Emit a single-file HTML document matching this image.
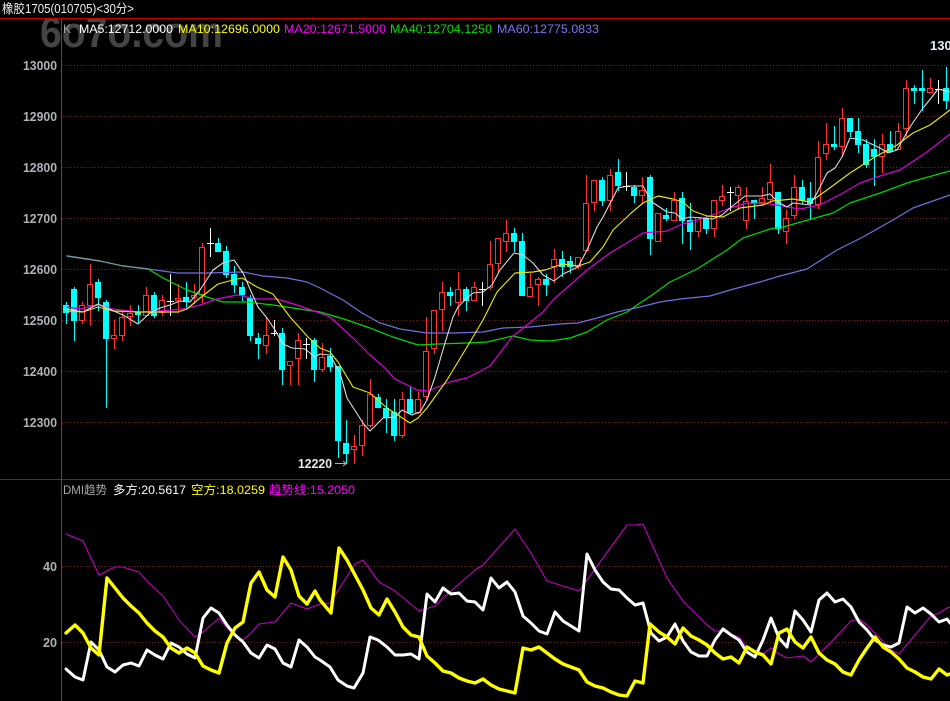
<!DOCTYPE html>
<html>
<head>
<meta charset="utf-8">
<title>橡胶1705</title>
<style>
html,body{margin:0;padding:0;background:#000;width:950px;height:701px;overflow:hidden}
svg{display:block;position:absolute;left:0;top:0}
text{font-family:"Liberation Sans","Noto Sans CJK SC",sans-serif;white-space:pre}
.ax{font-weight:bold;font-size:13px;fill:#aeb2b6}
.lg{font-size:12px}
.g{stroke:#7e1c1c;stroke-width:1;stroke-dasharray:1 2;fill:none}
.l{fill:none;stroke-linejoin:round;stroke-linecap:round}
</style>
</head>
<body>
<svg width="950" height="701" viewBox="0 0 950 701" xmlns="http://www.w3.org/2000/svg">
<rect width="950" height="701" fill="#000"/>
<clipPath id="c1"><rect x="0" y="19" width="950" height="40"/></clipPath>
<text clip-path="url(#c1)" x="40" y="47" font-size="44" font-weight="bold" fill="#444444" textLength="183" lengthAdjust="spacingAndGlyphs">6o7o.com</text>

<text x="2" y="13" font-size="12.5" fill="#f0f0f0" style="font-family:'WenQuanYi Zen Hei','Liberation Sans',sans-serif" textLength="132" lengthAdjust="spacingAndGlyphs">橡胶1705(010705)&lt;30分&gt;</text>

<g shape-rendering="crispEdges">
<path d="M0 18.5H950M0 479.5H950" stroke="#c40000" fill="none"/>
<path d="M61.5 19V701" stroke="#a82a2a" fill="none"/>
<path class="g" d="M62 65.5H950M62 116.5H950M62 167.5H950M62 218.5H950M62 269.5H950M62 320.5H950M62 371.5H950M62 422.5H950M62 566.5H950M62 642.5H950"/>

<!-- red wicks -->
<path fill="none" stroke="#ff3232" d="M82.5 302V324M90.5 264V326M114.5 320V349M122.5 310V341M130.5 305V326M146.5 287V317M162.5 295V316M178.5 284V313M194.5 284V304M202.5 243V303M266.5 317V354M290.5 361V385M298.5 333V385M322.5 343V372M354.5 435V464M362.5 420V456M370.5 379V428M402.5 392V438M418.5 392V414M426.5 317V400M434.5 310V354M442.5 282V331M458.5 272V316M474.5 282V301M490.5 241V290M498.5 238V273M506.5 220V252M530.5 273V297M538.5 277V306M554.5 249V283M578.5 257V269M586.5 175V252M594.5 180V211M610.5 169V211M642.5 177V203M658.5 213V242M674.5 192V221M698.5 217V237M714.5 200V237M722.5 185V206M738.5 185V210M746.5 187V229M762.5 187V206M770.5 164V203M786.5 210V244M794.5 175V219M818.5 141V209M826.5 123V160M842.5 108V157M882.5 134V173M898.5 123V150M906.5 80V137M930.5 78V93"/>
<!-- red bodies -->
<path fill="#000" stroke="#ff3232" d="M79.5 305.5h5V320.5h-5zM87.5 284.5h5V305.5h-5zM111.5 335.5h5V338.5h-5zM119.5 317.5h5V335.5h-5zM127.5 313.5h5V316.5h-5zM143.5 295.5h5V315.5h-5zM159.5 300.5h5V312.5h-5zM175.5 298.5h5V300.5h-5zM191.5 295.5h5V297.5h-5zM199.5 247.5h5V294.5h-5zM263.5 335.5h5V345.5h-5zM287.5 361.5h5V365.5h-5zM295.5 340.5h5V358.5h-5zM319.5 357.5h5V369.5h-5zM351.5 446.5h5V449.5h-5zM359.5 425.5h5V445.5h-5zM367.5 394.5h5V425.5h-5zM399.5 399.5h5V435.5h-5zM415.5 399.5h5V412.5h-5zM423.5 351.5h5V396.5h-5zM431.5 310.5h5V348.5h-5zM439.5 292.5h5V309.5h-5zM455.5 289.5h5V302.5h-5zM471.5 287.5h5V300.5h-5zM487.5 264.5h5V287.5h-5zM495.5 238.5h5V263.5h-5zM503.5 233.5h5V241.5h-5zM527.5 287.5h5V296.5h-5zM535.5 279.5h5V284.5h-5zM551.5 259.5h5V266.5h-5zM575.5 257.5h5V266.5h-5zM583.5 203.5h5V250.5h-5zM591.5 180.5h5V202.5h-5zM607.5 175.5h5V200.5h-5zM639.5 190.5h5V195.5h-5zM655.5 213.5h5V241.5h-5zM671.5 200.5h5V220.5h-5zM695.5 217.5h5V231.5h-5zM711.5 200.5h5V228.5h-5zM719.5 196.5h5V200.5h-5zM735.5 187.5h5V195.5h-5zM743.5 201.5h5V220.5h-5zM759.5 198.5h5V202.5h-5zM767.5 182.5h5V199.5h-5zM783.5 218.5h5V231.5h-5zM791.5 187.5h5V215.5h-5zM815.5 157.5h5V204.5h-5zM823.5 144.5h5V153.5h-5zM839.5 118.5h5V146.5h-5zM879.5 144.5h5V156.5h-5zM895.5 131.5h5V149.5h-5zM903.5 88.5h5V128.5h-5zM927.5 88.5h5V92.5h-5z"/>
<!-- cyan wicks -->
<path fill="none" stroke="#00ffff" d="M66.5 302V324M74.5 287V341M98.5 279V311M106.5 300V408M138.5 305V324M154.5 292V318M186.5 282V309M218.5 238V252M226.5 246V278M234.5 266V293M242.5 282V301M250.5 295V341M258.5 333V359M282.5 328V385M314.5 338V382M330.5 348V372M338.5 366V458M346.5 420V464M378.5 394V408M386.5 399V433M394.5 399V441M410.5 387V414M450.5 287V306M466.5 287V311M514.5 228V252M522.5 233V296M546.5 274V296M562.5 251V277M570.5 256V273M602.5 177V206M618.5 159V191M634.5 185V203M650.5 175V255M666.5 208V221M682.5 192V244M690.5 203V250M706.5 216V234M754.5 200V219M778.5 192V234M802.5 180V204M810.5 182V219M834.5 126V150M850.5 118V137M858.5 118V153M866.5 139V168M874.5 139V186M890.5 131V152M914.5 85V104M922.5 70V111M946.5 67V109"/>
<!-- cyan bodies -->
<path fill="#00ffff" d="M63 305h6V313h-6zM71 289h6V321h-6zM95 282h6V298h-6zM103 302h6V339h-6zM135 312h6V315h-6zM151 295h6V316h-6zM183 297h6V302h-6zM215 243h6V252h-6zM223 251h6V275h-6zM231 274h6V285h-6zM239 287h6V295h-6zM247 298h6V336h-6zM255 338h6V344h-6zM279 333h6V370h-6zM311 340h6V370h-6zM327 356h6V367h-6zM335 366h6V441h-6zM343 443h6V454h-6zM375 397h6V408h-6zM383 408h6V418h-6zM391 412h6V436h-6zM407 399h6V413h-6zM447 292h6V296h-6zM463 289h6V301h-6zM511 233h6V242h-6zM519 241h6V296h-6zM543 279h6V285h-6zM559 259h6V267h-6zM567 261h6V267h-6zM599 180h6V201h-6zM615 172h6V186h-6zM631 187h6V196h-6zM647 177h6V239h-6zM663 215h6V219h-6zM679 198h6V221h-6zM687 220h6V232h-6zM703 218h6V229h-6zM751 200h6V204h-6zM775 192h6V229h-6zM799 187h6V201h-6zM807 198h6V204h-6zM831 144h6V147h-6zM847 118h6V132h-6zM855 131h6V145h-6zM863 144h6V165h-6zM871 149h6V157h-6zM887 144h6V152h-6zM911 88h6V91h-6zM919 88h6V91h-6zM943 88h6V101h-6z"/>
<!-- white doji -->
<path fill="none" stroke="#fff" d="M170.5 274V316M167 301.5H174M210.5 228V257M207 243.5H214M274.5 320V336M271 333.5H278M306.5 338V359M303 344.5H310M482.5 282V306M479 289.5H486M626.5 172V191M623 186.5H630M730.5 187V211M727 192.5H734M938.5 80V104M935 89.5H942"/>
</g>

<!-- MA40 -->
<path class="l" stroke="#00d800" stroke-width="1.2" d="M148 269L163 278L187 290L207 297L223 302L247 302L273 305L293 308L320 312L347 320L370 328L393 337L418 345L437 344L467 343L487 342L513 336L530 340L550 341L570 338L587 332L607 320L627 312L640 303L655 293L670 282L697 269L727 250L743 238L770 229L783 227L833 213L850 203L880 193L910 182L950 171"/>
<!-- MA60 -->
<path class="l" stroke="#7070e0" stroke-width="1.2" d="M148 269L177 273L207 273L243 272L263 276L287 278L307 282L320 288L343 300L362 313L380 323L400 329L427 333L453 333L483 332L503 328L530 327L560 324L578 323L597 318L617 312L640 307L660 302L680 299L710 296L730 290L760 282L780 276L807 269L837 250L863 237L893 220L913 208L950 195"/>
<!-- MA40 + MA60 overlap -->
<path class="l" stroke="#6e9a9e" stroke-width="1.4" d="M67 256L100 261L123 266L148 269"/>
<!-- MA20 -->
<path class="l" stroke="#d800d8" stroke-width="1.2" d="M67 307L80 309L98 305L113 309L140 312L160 311L183 309L200 305L217 299L237 295L257 299L277 299L297 305L317 312L330 317L353 338L370 355L385 368L395 379L417 390L428 391L450 382L467 378L490 366L512 337L527 325L543 312L553 300L587 270L610 253L630 241L643 233L667 231L680 225L707 217L730 208L747 203L770 204L800 209L820 205L843 193L860 183L883 175L900 170L927 152L950 134"/>
<!-- MA10 -->
<path class="l" stroke="#e8e800" stroke-width="1.15" d="M67 311L83 312L98 307L113 311L140 312L178 312L187 309L200 298L218 284L233 280L242 278L257 287L273 294L290 317L308 337L320 348L330 352L338 362L353 387L370 393L387 408L410 423L418 418L427 408L447 380L467 347L483 320L497 292L515 273L533 272L545 270L563 264L578 266L590 262L603 247L613 230L627 217L630 214L643 203L658 196L673 199L683 202L693 211L707 216L723 217L740 208L763 205L772 201L793 199L810 202L827 190L850 173L875 157L897 145L913 133L930 125L950 110"/>
<!-- MA5 -->
<path class="l" stroke="#dcdcdc" stroke-width="1.1" d="M67 309L83 312L98 304L107 308L123 315L138 324L150 313L160 308L170 305L180 301L190 302L200 290L213 270L223 263L234 260L243 273L258 307L267 318L275 330L283 344L292 348L305 349L315 357L320 354L330 355L340 373L347 398L363 423L370 431L383 418L395 417L402 410L412 415L420 412L427 400L435 377L445 343L453 317L458 307L467 298L473 293L483 292L492 285L500 270L514 253L523 255L533 263L543 275L554 281L563 274L578 267L587 250L597 227L603 217L618 188L628 186L643 186L652 202L667 212L675 213L682 219L690 217L713 219L722 215L730 208L745 196L762 196L770 194L778 202L787 207L793 203L810 205L817 193L827 173L835 168L842 157L850 138L863 140L880 148L888 153L897 150L910 127L923 108L932 97L938 89L950 92"/>

<!-- DMI magenta -->
<path class="l" stroke="#c000c0" stroke-width="1.1" d="M66 534L83 541L99 575L115 567L123 567L139 572L147 581L163 596L179 620L195 637L203 632L219 618L227 628L235 636L243 640L251 633L259 624L275 622L291 603L307 609L320 604L330 603L355 564L363 560L379 582L395 591L419 611L435 606L443 598L475 570L483 565L515 529L531 553L547 581L563 586L579 591L627 525L635 525L643 524L667 578L683 601L707 625L715 631L723 631L739 637L747 647L763 654L771 648L779 654L787 658L803 656L811 662L835 638L851 621L859 619L867 625L891 650L899 654L915 635L931 616L939 613L947 608L950 607"/>
<!-- DMI white -->
<path class="l" stroke="#fff" stroke-width="3" d="M66 669L75 677L83 680L91 642L99 650L107 667L115 672L123 665L131 663L139 666L147 650L155 655L163 659L171 643L179 647L187 654L195 658L203 618L211 608L219 613L227 625L235 635L243 642L251 653L259 658L267 645L275 649L283 663L291 667L299 640L307 647L315 657L320 660L330 667L338 680L347 686L354 688L363 673L370 637L378 640L387 647L395 655L403 655L411 654L419 659L427 594L435 602L443 588L451 594L459 593L467 601L475 602L483 610L491 578L499 588L507 582L515 592L523 616L531 623L539 631L547 634L555 612L563 621L571 626L579 631L587 554L595 570L603 582L611 589L619 590L627 598L635 605L643 603L651 633L659 641L667 637L675 624L683 641L691 652L699 656L707 656L715 640L723 629L731 635L739 640L747 652L755 657L763 640L771 618L779 638L787 647L795 611L803 620L811 632L819 600L827 593L835 602L843 599L851 607L859 622L867 630L875 640L883 645L891 647L899 643L907 607L915 613L923 608L931 614L939 622L947 619L950 623"/>
<!-- DMI yellow -->
<path class="l" stroke="#ffff00" stroke-width="3.4" d="M66 633L75 625L83 633L91 648L99 655L107 578L115 588L123 598L131 606L139 613L147 623L155 631L163 637L171 648L179 653L187 648L195 653L203 666L211 670L219 673L227 643L235 628L243 622L251 583L259 572L267 590L275 597L283 557L291 570L299 596L307 604L315 591L320 600L331 613L339 548L347 560L355 575L363 590L371 608L379 615L387 599L395 612L403 627L411 635L419 637L427 656L435 663L443 671L451 673L459 678L467 681L475 683L483 679L491 685L499 689L507 691L515 693L523 648L531 650L539 647L547 653L555 659L563 664L571 667L579 670L587 682L595 686L603 688L611 692L619 695L627 696L635 681L643 683L650 624L659 632L667 637L675 644L683 628L691 636L699 640L707 645L715 653L723 659L731 657L739 663L747 647L755 652L763 655L771 664L779 633L787 629L795 642L803 648L811 637L819 653L827 660L835 664L843 672L851 675L859 660L867 648L875 637L883 647L891 652L899 659L907 668L915 672L923 677L931 679L939 669L947 675L950 674"/>

<!-- axis labels -->
<text class="ax" x="23" y="70" textLength="34" lengthAdjust="spacingAndGlyphs">13000</text>
<text class="ax" x="23" y="121" textLength="34" lengthAdjust="spacingAndGlyphs">12900</text>
<text class="ax" x="23" y="172" textLength="34" lengthAdjust="spacingAndGlyphs">12800</text>
<text class="ax" x="23" y="223" textLength="34" lengthAdjust="spacingAndGlyphs">12700</text>
<text class="ax" x="23" y="274" textLength="34" lengthAdjust="spacingAndGlyphs">12600</text>
<text class="ax" x="23" y="325" textLength="34" lengthAdjust="spacingAndGlyphs">12500</text>
<text class="ax" x="23" y="376" textLength="34" lengthAdjust="spacingAndGlyphs">12400</text>
<text class="ax" x="23" y="427" textLength="34" lengthAdjust="spacingAndGlyphs">12300</text>
<text class="ax" x="43" y="571" textLength="14" lengthAdjust="spacingAndGlyphs">40</text>
<text class="ax" x="43" y="647" textLength="14" lengthAdjust="spacingAndGlyphs">20</text>

<!-- legend -->
<text class="lg" x="63" y="33" fill="#a0a0a0">K</text>
<text class="lg" x="79" y="33" fill="#fff" textLength="94" lengthAdjust="spacingAndGlyphs">MA5:12712.0000</text>
<text class="lg" x="178" y="33" fill="#ffff00" textLength="102" lengthAdjust="spacingAndGlyphs">MA10:12696.0000</text>
<text class="lg" x="284" y="33" fill="#ff00ff" textLength="102" lengthAdjust="spacingAndGlyphs">MA20:12671.5000</text>
<text class="lg" x="390" y="33" fill="#00e000" textLength="102" lengthAdjust="spacingAndGlyphs">MA40:12704.1250</text>
<text class="lg" x="497" y="33" fill="#7878f0" textLength="102" lengthAdjust="spacingAndGlyphs">MA60:12775.0833</text>

<!-- DMI legend -->
<text class="lg" x="63" y="494" fill="#a8a8a8" textLength="44" lengthAdjust="spacingAndGlyphs">DMI趋势</text>
<text class="lg" x="113" y="494" fill="#fff" textLength="73" lengthAdjust="spacingAndGlyphs">多方:20.5617</text>
<text class="lg" x="191" y="494" fill="#ffff00" textLength="74" lengthAdjust="spacingAndGlyphs">空方:18.0259</text>
<text class="lg" x="269" y="494" fill="#ff00ff" textLength="86" lengthAdjust="spacingAndGlyphs">趋势线:15.2050</text>

<!-- extremes -->
<text x="930" y="50" font-size="13" font-weight="bold" fill="#e8f0f8">130</text>
<text x="298" y="468" font-size="13" font-weight="bold" fill="#e8e8e8" textLength="34" lengthAdjust="spacingAndGlyphs">12220</text>
<path d="M335 463.5H346M343 461L346.5 463.5L343 466" stroke="#b0b0b0" fill="none"/>
</svg>
</body>
</html>
